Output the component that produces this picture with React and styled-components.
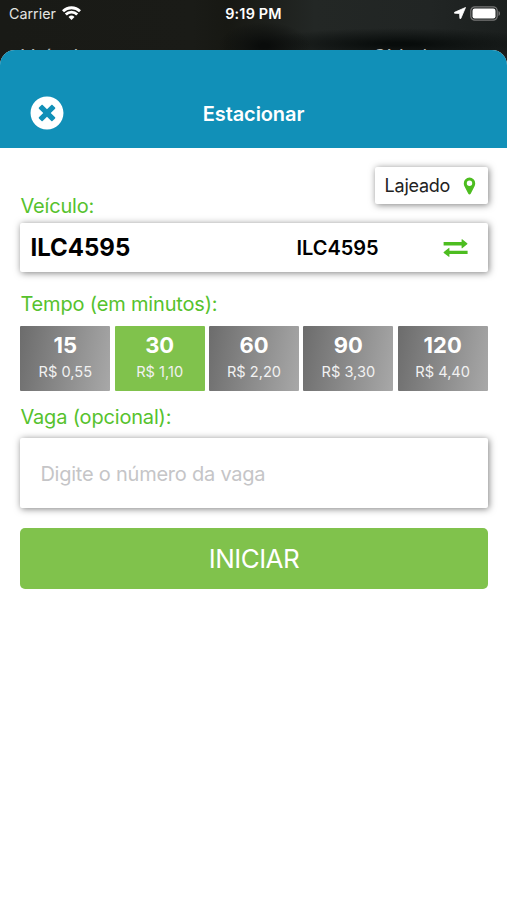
import React, { useState } from 'react';
import styled, { createGlobalStyle } from 'styled-components';
import { FaTimesCircle } from 'react-icons/fa';

const GlobalStyle = createGlobalStyle`
  * {
    box-sizing: border-box;
  }

  body {
    margin: 0;
    background: #fff;
    font-family: Inter, 'Liberation Sans', sans-serif;
    color: #000;
  }

  button, input {
    font-family: inherit;
    border: 0;
    padding: 0;
    margin: 0;
  }
`;

const Screen = styled.div`
  height: 900px;
  overflow: hidden;
  display: flex;
  flex-direction: column;
  background:
    radial-gradient(ellipse 46px 24px at 264px 46px, #0a0c0b 10%, transparent),
    radial-gradient(ellipse 150px 16px at 400px 44px, #080c0b 10%, transparent),
    linear-gradient(90deg, #191a16 0%, #1a1b17 38%, #171813 45%, #232725 62%, #212524 85%, #1b1f1e 100%);
`;

const StatusBar = styled.div`
  flex: none;
  height: 28px;
  padding: 0 6px 0 9px;
  display: grid;
  grid-template-columns: 1fr auto 1fr;
  align-items: center;
  color: #fff;
`;

const Carrier = styled.div`
  display: flex;
  align-items: center;
  gap: 6px;
  font-size: 14.3px;
  line-height: 28px;
  color: #e4e4e2;

  svg {
    margin-top: -3px;
  }
`;

const Clock = styled.div`
  margin: -2px 0 0 -3px;
  font-size: 14.4px;
  font-weight: 600;
  letter-spacing: 0.2px;
`;

const StatusIcons = styled.div`
  display: flex;
  justify-content: flex-end;
  align-items: center;
  gap: 4px;
  margin-top: -2px;
`;

const Behind = styled.div`
  flex: none;
  height: 22px;
  padding: 17px 68px 0 21px;
  display: flex;
  justify-content: space-between;
  overflow: hidden;
  font-size: 20px;
  line-height: 24px;
  color: #b4b6b4;
`;

const Sheet = styled.div`
  flex: 1;
  border-radius: 15px 15px 0 0;
  background: #fff;
  overflow: hidden;
`;

const Header = styled.div`
  height: 98px;
  padding: 28px 30px 0;
  display: grid;
  grid-template-columns: 1fr auto 1fr;
  align-items: center;
  background: #1190b8;
  color: #fff;
`;

const Title = styled.div`
  padding-top: 1px;
  font-size: 20px;
  font-weight: 600;
  letter-spacing: -0.1px;
`;

const CloseButton = styled.button`
  width: 34px;
  height: 34px;
  background: none;
  color: #fff;

  svg {
    display: block;
  }
`;

const Form = styled.div`
  padding: 19px 19.4px 0 20.4px;
  display: flex;
  flex-direction: column;
`;

const Card = styled.div`
  background: #fff;
  border-radius: 2px;
  box-shadow: 1px 1px 7px rgba(0, 0, 0, 0.5);
`;

const City = styled(Card)`
  align-self: flex-end;
  width: 113px;
  height: 37px;
  padding: 0 12px 0 10px;
  display: flex;
  align-items: center;
  justify-content: space-between;
  font-size: 18px;
  letter-spacing: -0.25px;
  color: #222;
`;

const Label = styled.div`
  height: 24px;
  margin-top: ${props => props.$top}px;
  font-size: 20px;
  line-height: 24.8px;
  letter-spacing: -0.17px;
  color: #56c22d;
`;

const Vehicle = styled(Card)`
  height: 49px;
  margin-top: 5px;
  padding: 0 20px 0 10px;
  display: grid;
  grid-template-columns: 266px 1fr auto;
  align-items: center;
`;

const Plate = styled.div`
  font-size: ${props => (props.$small ? 20 : 24)}px;
  font-weight: ${props => (props.$small ? 600 : 700)};
`;

const Times = styled.div`
  height: 65px;
  margin-top: 10px;
  display: grid;
  grid-template-columns: repeat(5, 1fr);
  gap: 4.5px;
`;

const TimeButton = styled.button`
  display: flex;
  flex-direction: column;
  align-items: center;
  padding-top: 5px;
  border-radius: 1px;
  color: #fff;
  background: ${props => (props.$active ? '#80c24c' : 'linear-gradient(100deg, #6c6c6c, #a8a8a8)')};
`;

const Minutes = styled.span`
  font-size: 22px;
  line-height: 28px;
  font-weight: 700;
`;

const Price = styled.span`
  font-size: 14.6px;
  line-height: 27px;
  color: #f1f1f1;
`;

const SpotCard = styled(Card)`
  height: 70px;
  margin-top: 9px;
  display: flex;
`;

const SpotInput = styled.input`
  flex: 1;
  padding: 2px 20px 0;
  background: none;
  outline: none;
  font-size: 20px;
  letter-spacing: -0.23px;

  &::placeholder {
    color: #c5c5c7;
    opacity: 1;
  }
`;

const StartButton = styled.button`
  height: 61px;
  margin-top: 20px;
  border-radius: 5px;
  background: #80c24c;
  color: #fff;
  font-size: 26px;
  letter-spacing: -0.55px;
`;

const options = [
  { minutes: 15, price: 'R$ 0,55' },
  { minutes: 30, price: 'R$ 1,10' },
  { minutes: 60, price: 'R$ 2,20' },
  { minutes: 90, price: 'R$ 3,30' },
  { minutes: 120, price: 'R$ 4,40' },
];

const Wifi = () => (
  <svg width="19" height="14" viewBox="0 0 19 14" fill="none" stroke="#fff" strokeWidth="2.8">
    <path d="M1 5.2a12.2 12.2 0 0 1 17 0" />
    <path d="M3.800 8.600a8 8 0 0 1 11.400 0" />
    <path d="M9.5 13.900 6.500 10.900a4.400 4.400 0 0 1 6 0z" fill="#fff" stroke="none" />
  </svg>
);

const LocationArrow = () => (
  <svg width="12" height="12" viewBox="0 0 12 12" fill="#fff" stroke="#fff" strokeWidth="0.8" strokeLinejoin="round">
    <path d="M11.500.5.5 5.300v.9l5.100.3.300 5h.9z" />
  </svg>
);

const Battery = () => (
  <svg width="31" height="15" viewBox="0 0 31 15">
    <rect x="0.8" y="0.8" width="26.4" height="13.4" rx="4" fill="none" stroke="#777" strokeWidth="1.2" />
    <rect x="2.5" y="2.5" width="23" height="10" rx="2.2" fill="#fff" />
    <path d="M28.5 5v5c2-.7 2-4.3 0-5z" fill="#777" />
  </svg>
);

const Pin = () => (
  <svg width="13" height="18" viewBox="0 0 13 18">
    <path
      d="M6.5.5a5.7 5.7 0 0 1 5.7 5.7c0 1.6-.4 2.5-.9 3.6L7.7 16.7c-.5.9-1.9.9-2.4 0L1.7 9.8C1.2 8.7.8 7.8.8 6.2A5.7 5.7 0 0 1 6.5.5zm0 3.1a2.7 2.7 0 1 0 0 5.4 2.7 2.7 0 0 0 0-5.4z"
      fill="#4dbd20"
      fillRule="evenodd"
    />
  </svg>
);

const Swap = () => (
  <svg width="25" height="18" viewBox="0 0 25 18" fill="#4dbd20">
    <path d="M.6 3.1H18.6V.6q0-.7.6-.3L24.2 4.3q.5.5 0 1L19.2 9.2q-.6.4-.6-.3V6.400H.6z" />
    <path d="M24.6 11.800H6.4V9.3q0-.7-.6-.3L.8 13q-.5.500 0 1l5 3.8q.6.4.6-.3V15.100h18.2z" />
  </svg>
);

const App = () => {
  const [selected, setSelected] = useState(30);
  const [spot, setSpot] = useState('');

  return (
    <Screen>
      <GlobalStyle />
      <StatusBar>
        <Carrier>Carrier <Wifi /></Carrier>
        <Clock>9:19 PM</Clock>
        <StatusIcons>
          <LocationArrow />
          <Battery />
        </StatusIcons>
      </StatusBar>
      <Behind>
        <span>Veículo</span>
        <span>Cidade</span>
      </Behind>
      <Sheet>
        <Header>
          <CloseButton aria-label="Fechar"><FaTimesCircle size={34} /></CloseButton>
          <Title>Estacionar</Title>
        </Header>
        <Form>
          <City>Lajeado <Pin /></City>
          <Label $top={-10}>Veículo:</Label>
          <Vehicle>
            <Plate>ILC4595</Plate>
            <Plate $small>ILC4595</Plate>
            <Swap />
          </Vehicle>
          <Label $top={20}>Tempo (em minutos):</Label>
          <Times>
            {options.map(({ minutes, price }) => (
              <TimeButton key={minutes} $active={minutes === selected} onClick={() => setSelected(minutes)}>
                <Minutes>{minutes}</Minutes>
                <Price>{price}</Price>
              </TimeButton>
            ))}
          </Times>
          <Label $top={14}>Vaga (opcional):</Label>
          <SpotCard>
            <SpotInput
              placeholder="Digite o número da vaga"
              value={spot}
              onChange={e => setSpot(e.target.value)}
            />
          </SpotCard>
          <StartButton>INICIAR</StartButton>
        </Form>
      </Sheet>
    </Screen>
  );
};

export default App;
